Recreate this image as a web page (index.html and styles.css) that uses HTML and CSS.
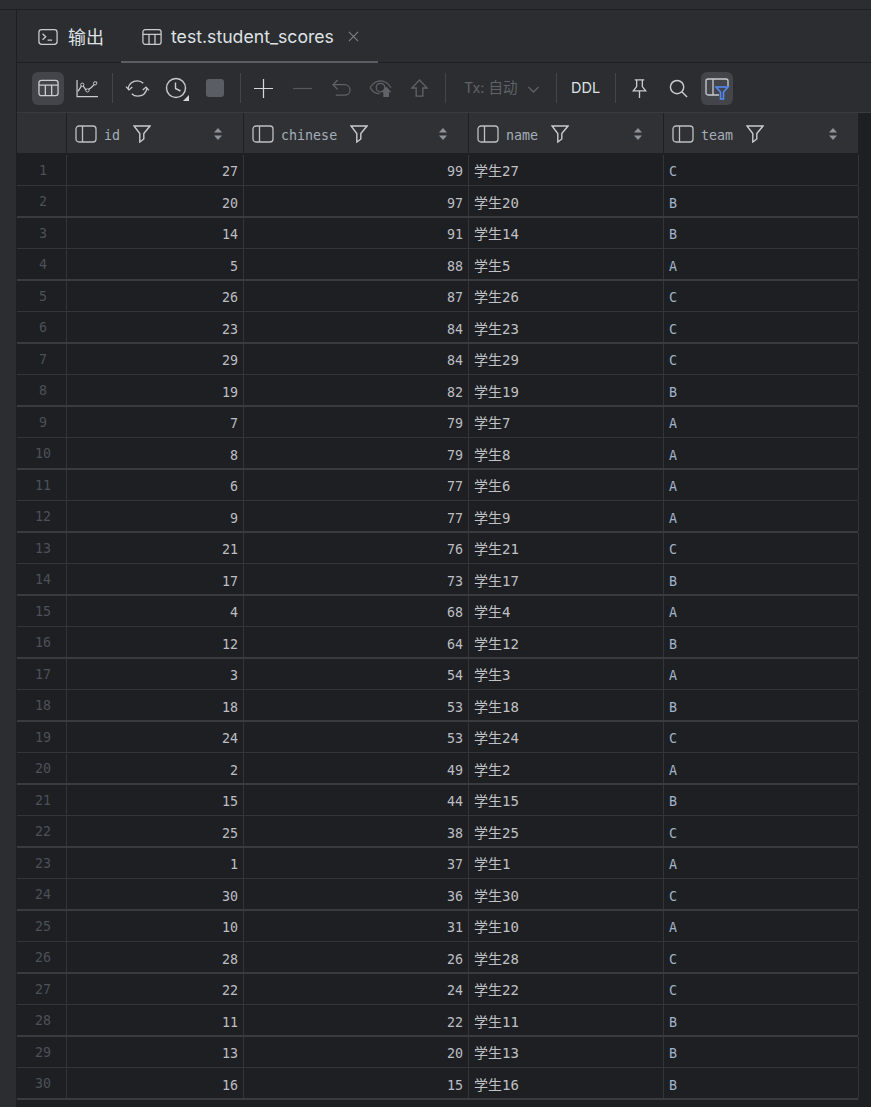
FILE: index.html
```html
<!DOCTYPE html>
<html lang="zh">
<head>
<meta charset="utf-8">
<title>test.student_scores</title>
<link rel="stylesheet" href="styles.css">
</head>
<body>
<svg class="defs" width="0" height="0" aria-hidden="true">
  <defs>
    <symbol id="col" viewBox="0 0 22 18"><rect x="1" y="1" width="20" height="16" rx="3" fill="none" stroke="#bcbfc4" stroke-width="1.3"/><path d="M7.5 1v16" stroke="#bcbfc4" stroke-width="1.3"/></symbol>
    <symbol id="funnel" viewBox="0 0 18 18"><path d="M1 1h16l-6.200 7.500v5.500L6.800 17V8.500z" fill="none" stroke="#c8cbd0" stroke-width="1.400" stroke-linejoin="miter"/></symbol>
    <symbol id="sort" viewBox="0 0 10 14"><path d="M5 1l4 4.500H1z" fill="#8f939a"/><path d="M5 13l4-4.500H1z" fill="#8f939a"/></symbol>
    <symbol id="grid" viewBox="0 0 22 18"><rect x="1" y="1" width="20" height="16" rx="2.500" fill="none" stroke="#c8cbd0" stroke-width="1.400"/><path d="M1 6h20M7.700 6v11M14.300 6v11" fill="none" stroke="#c8cbd0" stroke-width="1.400"/></symbol>
  </defs>
</svg>
<div class="shell">
  <div class="topstrip"></div>
  <div class="main">
    <div class="sidestrip"></div>
    <div class="panel">
      <div class="tabs">
        <div class="tab">
          <svg class="tabicon" viewBox="0 0 22 18"><rect x="1" y="1" width="20" height="16" rx="3" fill="none" stroke="#c8cbd0" stroke-width="1.400"/><path d="M5 5.500l3.500 3.200L5 12M10.500 12.500h5" fill="none" stroke="#c8cbd0" stroke-width="1.400"/></svg>
          <span class="tabtext">输出</span>
        </div>
        <div class="tab tab-active">
          <svg class="tabicon"><use href="#grid"/></svg>
          <span class="tabtext">test.student_scores</span>
          <svg class="tabclose" viewBox="0 0 12 12"><path d="M1 1l10 10M11 1L1 11" stroke="#7a7e85" stroke-width="1.300"/></svg>
        </div>
      </div>
      <div class="toolbar">
        <div class="btn btn-on"><svg class="i22"><use href="#grid"/></svg></div>
        <div class="btn"><svg class="i24" viewBox="0 0 24 20"><path d="M1 1v17.500h22" fill="none" stroke="#c8cbd0" stroke-width="1.300"/><path d="M2 13l4.500-7 4.500 6.500 5-3.500 6-6" fill="none" stroke="#c8cbd0" stroke-width="1.300"/><circle cx="6.500" cy="6" r="1.700" fill="#2b2d30" stroke="#c8cbd0"/><circle cx="12" cy="12" r="1.700" fill="#2b2d30" stroke="#c8cbd0"/><circle cx="20" cy="4.500" r="1.700" fill="#2b2d30" stroke="#c8cbd0"/></svg></div>
        <div class="sep"></div>
        <div class="btn"><svg class="i24" viewBox="0 0 24 20"><path d="M2 10.500C3 5 7 2 12 2c2.500 0 4.500 1 6 2.500M22 9.500C21 15 17 18 12 18c-2.500 0-4.500-1-6-2.500" fill="none" stroke="#c8cbd0" stroke-width="1.400"/><path d="M0 8l3 3.500L6.500 8.500M24 12l-3-3.500-3.500 3" fill="none" stroke="#c8cbd0" stroke-width="1.400"/></svg></div>
        <div class="btn"><svg class="i24b" viewBox="0 0 24 24"><circle cx="11" cy="11" r="9.500" fill="none" stroke="#c8cbd0" stroke-width="1.400"/><path d="M10.500 5.500v6l5 2.500" fill="none" stroke="#c8cbd0" stroke-width="1.400"/><path d="M24 18v6h-6z" fill="#d5d7da"/></svg></div>
        <div class="btn"><div class="stop"></div></div>
        <div class="sep sep-tight"></div>
        <div class="btn"><svg class="i20" viewBox="0 0 20 20"><path d="M10 0v20M0 10h20" stroke="#d5d7da" stroke-width="1.300"/></svg></div>
        <div class="btn"><svg class="i20" viewBox="0 0 20 20"><path d="M0 10h20" stroke="#55585e" stroke-width="1.300"/></svg></div>
        <div class="btn"><svg class="i20" viewBox="0 0 20 20"><path d="M6 1L1 6l5 5M1 6h12c3.500 0 6 2.200 6 5.500S16.500 17 13 17H4" fill="none" stroke="#5f6268" stroke-width="1.300"/></svg></div>
        <div class="btn"><svg class="i24" viewBox="0 0 24 20"><path d="M1 9c3-4.500 7-7 11-7s8 2.500 11 7" fill="none" stroke="#5f6268" stroke-width="1.300"/><path d="M1 9c2.500 4 6 6.500 10 6.500" fill="none" stroke="#5f6268" stroke-width="1.300"/><circle cx="12" cy="9" r="4.500" fill="none" stroke="#5f6268" stroke-width="1.300"/><path d="M18 8l5.500 6H21v5h-6v-5h-2.500z" fill="#5f6268"/></svg></div>
        <div class="btn"><svg class="i20" viewBox="0 0 20 20"><path d="M10 1l8 8.500h-4.500V18h-7V9.500H2z" fill="none" stroke="#5f6268" stroke-width="1.400"/></svg></div>
        <div class="sep sep-tx"></div>
        <div class="tx"><span>Tx: 自动</span><svg class="chev" viewBox="0 0 12 7"><path d="M1 1l5 5 5-5" fill="none" stroke="#5f6268" stroke-width="1.300"/></svg></div>
        <div class="sep sep-ddl"></div>
        <div class="ddl">DDL</div>
        <div class="sep sep-last"></div>
        <div class="btn"><svg class="i20" viewBox="0 0 20 20"><path d="M5 1h10M7 1v7L3.500 12.500h13L13 8V1M10 12.500V20" fill="none" stroke="#c8cbd0" stroke-width="1.400"/></svg></div>
        <div class="btn"><svg class="i20" viewBox="0 0 20 20"><circle cx="8.500" cy="8.500" r="7" fill="none" stroke="#c8cbd0" stroke-width="1.500"/><path d="M13.500 13.500L19 19" stroke="#c8cbd0" stroke-width="1.500"/></svg></div>
        <div class="btn btn-on"><svg class="i24c" viewBox="0 0 24 22"><path d="M14 17H3a2 2 0 0 1-2-2V3a2 2 0 0 1 2-2h18a2 2 0 0 1 2 2v5M8 1v16" fill="none" stroke="#c8cbd0" stroke-width="1.300"/><path d="M11 9h12l-4.500 5v7h-3v-7z" fill="none" stroke="#548af7" stroke-width="1.600"/></svg></div>
      </div>
      <div class="grid">
        <div class="head">
          <div class="hcell hgutter"></div>
          <div class="hcell"><svg class="hcol"><use href="#col"/></svg><span class="hname">id</span><svg class="hfun"><use href="#funnel"/></svg><svg class="hsort"><use href="#sort"/></svg></div>
          <div class="hcell"><svg class="hcol"><use href="#col"/></svg><span class="hname">chinese</span><svg class="hfun"><use href="#funnel"/></svg><svg class="hsort"><use href="#sort"/></svg></div>
          <div class="hcell"><svg class="hcol"><use href="#col"/></svg><span class="hname">name</span><svg class="hfun"><use href="#funnel"/></svg><svg class="hsort"><use href="#sort"/></svg></div>
          <div class="hcell"><svg class="hcol"><use href="#col"/></svg><span class="hname">team</span><svg class="hfun"><use href="#funnel"/></svg><svg class="hsort"><use href="#sort"/></svg></div>
        </div>
        <div class="rows">
          <div class="row"><span class="rn">1</span><span class="num">27</span><span class="num">99</span><span class="txt">学生27</span><span class="ch">C</span></div>
          <div class="row"><span class="rn">2</span><span class="num">20</span><span class="num">97</span><span class="txt">学生20</span><span class="ch">B</span></div>
          <div class="row"><span class="rn">3</span><span class="num">14</span><span class="num">91</span><span class="txt">学生14</span><span class="ch">B</span></div>
          <div class="row"><span class="rn">4</span><span class="num">5</span><span class="num">88</span><span class="txt">学生5</span><span class="ch">A</span></div>
          <div class="row"><span class="rn">5</span><span class="num">26</span><span class="num">87</span><span class="txt">学生26</span><span class="ch">C</span></div>
          <div class="row"><span class="rn">6</span><span class="num">23</span><span class="num">84</span><span class="txt">学生23</span><span class="ch">C</span></div>
          <div class="row"><span class="rn">7</span><span class="num">29</span><span class="num">84</span><span class="txt">学生29</span><span class="ch">C</span></div>
          <div class="row"><span class="rn">8</span><span class="num">19</span><span class="num">82</span><span class="txt">学生19</span><span class="ch">B</span></div>
          <div class="row"><span class="rn">9</span><span class="num">7</span><span class="num">79</span><span class="txt">学生7</span><span class="ch">A</span></div>
          <div class="row"><span class="rn">10</span><span class="num">8</span><span class="num">79</span><span class="txt">学生8</span><span class="ch">A</span></div>
          <div class="row"><span class="rn">11</span><span class="num">6</span><span class="num">77</span><span class="txt">学生6</span><span class="ch">A</span></div>
          <div class="row"><span class="rn">12</span><span class="num">9</span><span class="num">77</span><span class="txt">学生9</span><span class="ch">A</span></div>
          <div class="row"><span class="rn">13</span><span class="num">21</span><span class="num">76</span><span class="txt">学生21</span><span class="ch">C</span></div>
          <div class="row"><span class="rn">14</span><span class="num">17</span><span class="num">73</span><span class="txt">学生17</span><span class="ch">B</span></div>
          <div class="row"><span class="rn">15</span><span class="num">4</span><span class="num">68</span><span class="txt">学生4</span><span class="ch">A</span></div>
          <div class="row"><span class="rn">16</span><span class="num">12</span><span class="num">64</span><span class="txt">学生12</span><span class="ch">B</span></div>
          <div class="row"><span class="rn">17</span><span class="num">3</span><span class="num">54</span><span class="txt">学生3</span><span class="ch">A</span></div>
          <div class="row"><span class="rn">18</span><span class="num">18</span><span class="num">53</span><span class="txt">学生18</span><span class="ch">B</span></div>
          <div class="row"><span class="rn">19</span><span class="num">24</span><span class="num">53</span><span class="txt">学生24</span><span class="ch">C</span></div>
          <div class="row"><span class="rn">20</span><span class="num">2</span><span class="num">49</span><span class="txt">学生2</span><span class="ch">A</span></div>
          <div class="row"><span class="rn">21</span><span class="num">15</span><span class="num">44</span><span class="txt">学生15</span><span class="ch">B</span></div>
          <div class="row"><span class="rn">22</span><span class="num">25</span><span class="num">38</span><span class="txt">学生25</span><span class="ch">C</span></div>
          <div class="row"><span class="rn">23</span><span class="num">1</span><span class="num">37</span><span class="txt">学生1</span><span class="ch">A</span></div>
          <div class="row"><span class="rn">24</span><span class="num">30</span><span class="num">36</span><span class="txt">学生30</span><span class="ch">C</span></div>
          <div class="row"><span class="rn">25</span><span class="num">10</span><span class="num">31</span><span class="txt">学生10</span><span class="ch">A</span></div>
          <div class="row"><span class="rn">26</span><span class="num">28</span><span class="num">26</span><span class="txt">学生28</span><span class="ch">C</span></div>
          <div class="row"><span class="rn">27</span><span class="num">22</span><span class="num">24</span><span class="txt">学生22</span><span class="ch">C</span></div>
          <div class="row"><span class="rn">28</span><span class="num">11</span><span class="num">22</span><span class="txt">学生11</span><span class="ch">B</span></div>
          <div class="row"><span class="rn">29</span><span class="num">13</span><span class="num">20</span><span class="txt">学生13</span><span class="ch">B</span></div>
          <div class="row"><span class="rn">30</span><span class="num">16</span><span class="num">15</span><span class="txt">学生16</span><span class="ch">B</span></div>
        </div>
      </div>
    </div>
  </div>
</div>
</body>
</html>
```
FILE: styles.css
```css
* { box-sizing: border-box; }
html, body { margin: 0; height: 100%; background: #1e1f22; overflow: hidden; }
.defs { position: absolute; }
svg { display: block; flex: none; overflow: visible; }
.shell { width: 871px; height: 1107px; display: flex; flex-direction: column; }
.topstrip { height: 10px; flex: none; background: #2b2d30; border-bottom: 1px solid #1e1f22; }
.main { flex: 1; display: flex; min-height: 0; }
.sidestrip { width: 17px; flex: none; background: #2b2d30; border-right: 1px solid #1e1f22; }
.panel { flex: 1; display: flex; flex-direction: column; min-width: 0; }

.tabs { height: 53px; flex: none; display: flex; padding-left: 21px; background: #2b2d30; border-bottom: 1px solid #1e1f22; font: 18px/1 "Inter", "Noto Sans CJK SC", sans-serif; color: #dfe1e5; }
.tab { display: flex; align-items: center; gap: 10px; padding-top: 2px; }
.tabtext { margin-top: 1px; }
.tab-active { margin-left: 17px; padding: 2px 19px 0 21px; gap: 9px; height: 53px; font-size: 17.67px; border-bottom: 2px solid #5a5d63; }
.tabicon { width: 20px; height: 18px; }
.tabclose { width: 11px; height: 11px; margin-left: 5px; }

.toolbar { height: 50px; flex: none; display: flex; align-items: center; gap: 7px; padding: 1px 0 0 15px; background: #2b2d30; border-bottom: 1px solid #393b40; }
.btn { width: 32px; height: 33px; display: flex; align-items: center; justify-content: center; border-radius: 6px; }
.btn-on { background: #43454a; }
.i22 { width: 21px; height: 18px; }
.i24 { width: 23px; height: 19px; }
.i24b { width: 24px; height: 24px; margin-top: 2px; margin-left: 2px; }
.i24c { width: 24px; height: 22px; margin-top: 2px; }
.i20 { width: 19px; height: 19px; }
.stop { width: 18px; height: 18px; border-radius: 3px; background: #5a5d63; }
.sep { width: 1px; height: 30px; background: #43454a; margin-left: 2px; margin-right: 1px; }
.sep-tight { margin-right: -1px; }
.sep-tx { margin-left: 3px; margin-right: 11px; }
.sep-ddl { margin-left: 9px; margin-right: 7px; }
.sep-last { margin-left: 7px; margin-right: 0; }
.tx { display: flex; align-items: center; gap: 9px; width: 76px; font: 14.5px/1 "Inter", "Noto Sans CJK SC", sans-serif; color: #5f6268; }
.chev { width: 13px; height: 7px; margin-top: 2px; }
.ddl { width: 30px; font: 14.5px/1 "Inter", sans-serif; color: #dfe1e5; }

.grid { width: 841px; }
.head, .row { display: grid; grid-template-columns: 50px 177px 225px 195px 195px; font: 13.33px/1 "DejaVu Sans Mono", "Noto Sans CJK SC", monospace; }
.head { height: 40px; background: #2f3135; }
.hcell { display: flex; align-items: center; padding: 1px 0 0 8px; border-right: 1px solid #1e1f22; }
.hgutter { padding: 0; }
.hcol { width: 22px; height: 18px; margin-right: 7px; }
.hname { color: #a6adb6; padding-top: 4px; }
.hfun { width: 18px; height: 18px; margin-left: 13px; }
.hsort { width: 10px; height: 14px; margin-left: auto; margin-right: 20px; }

.rows { margin-top: 2px; }
.row { height: 31px; border-bottom: 1px solid #33353a; }
.row:nth-child(even) { height: 32px; border-bottom: 2px solid #393b40; }
.row span { display: flex; align-items: center; padding: 3px 5px 0; border-right: 1px solid #33353a; }
.row:nth-child(even) span { padding-top: 5px; }
.row .rn, .row:nth-child(even) .rn { justify-content: center; padding: 1px 0 0 3px; color: #4b5059; }
.num { justify-content: flex-end; color: #bcbec4; }
.row .txt { color: #c0c2c6; font-size: 14px; padding-top: 1px; }
.row:nth-child(even) .txt { padding-top: 4px; }
.ch { color: #a0b4cc; }
```
